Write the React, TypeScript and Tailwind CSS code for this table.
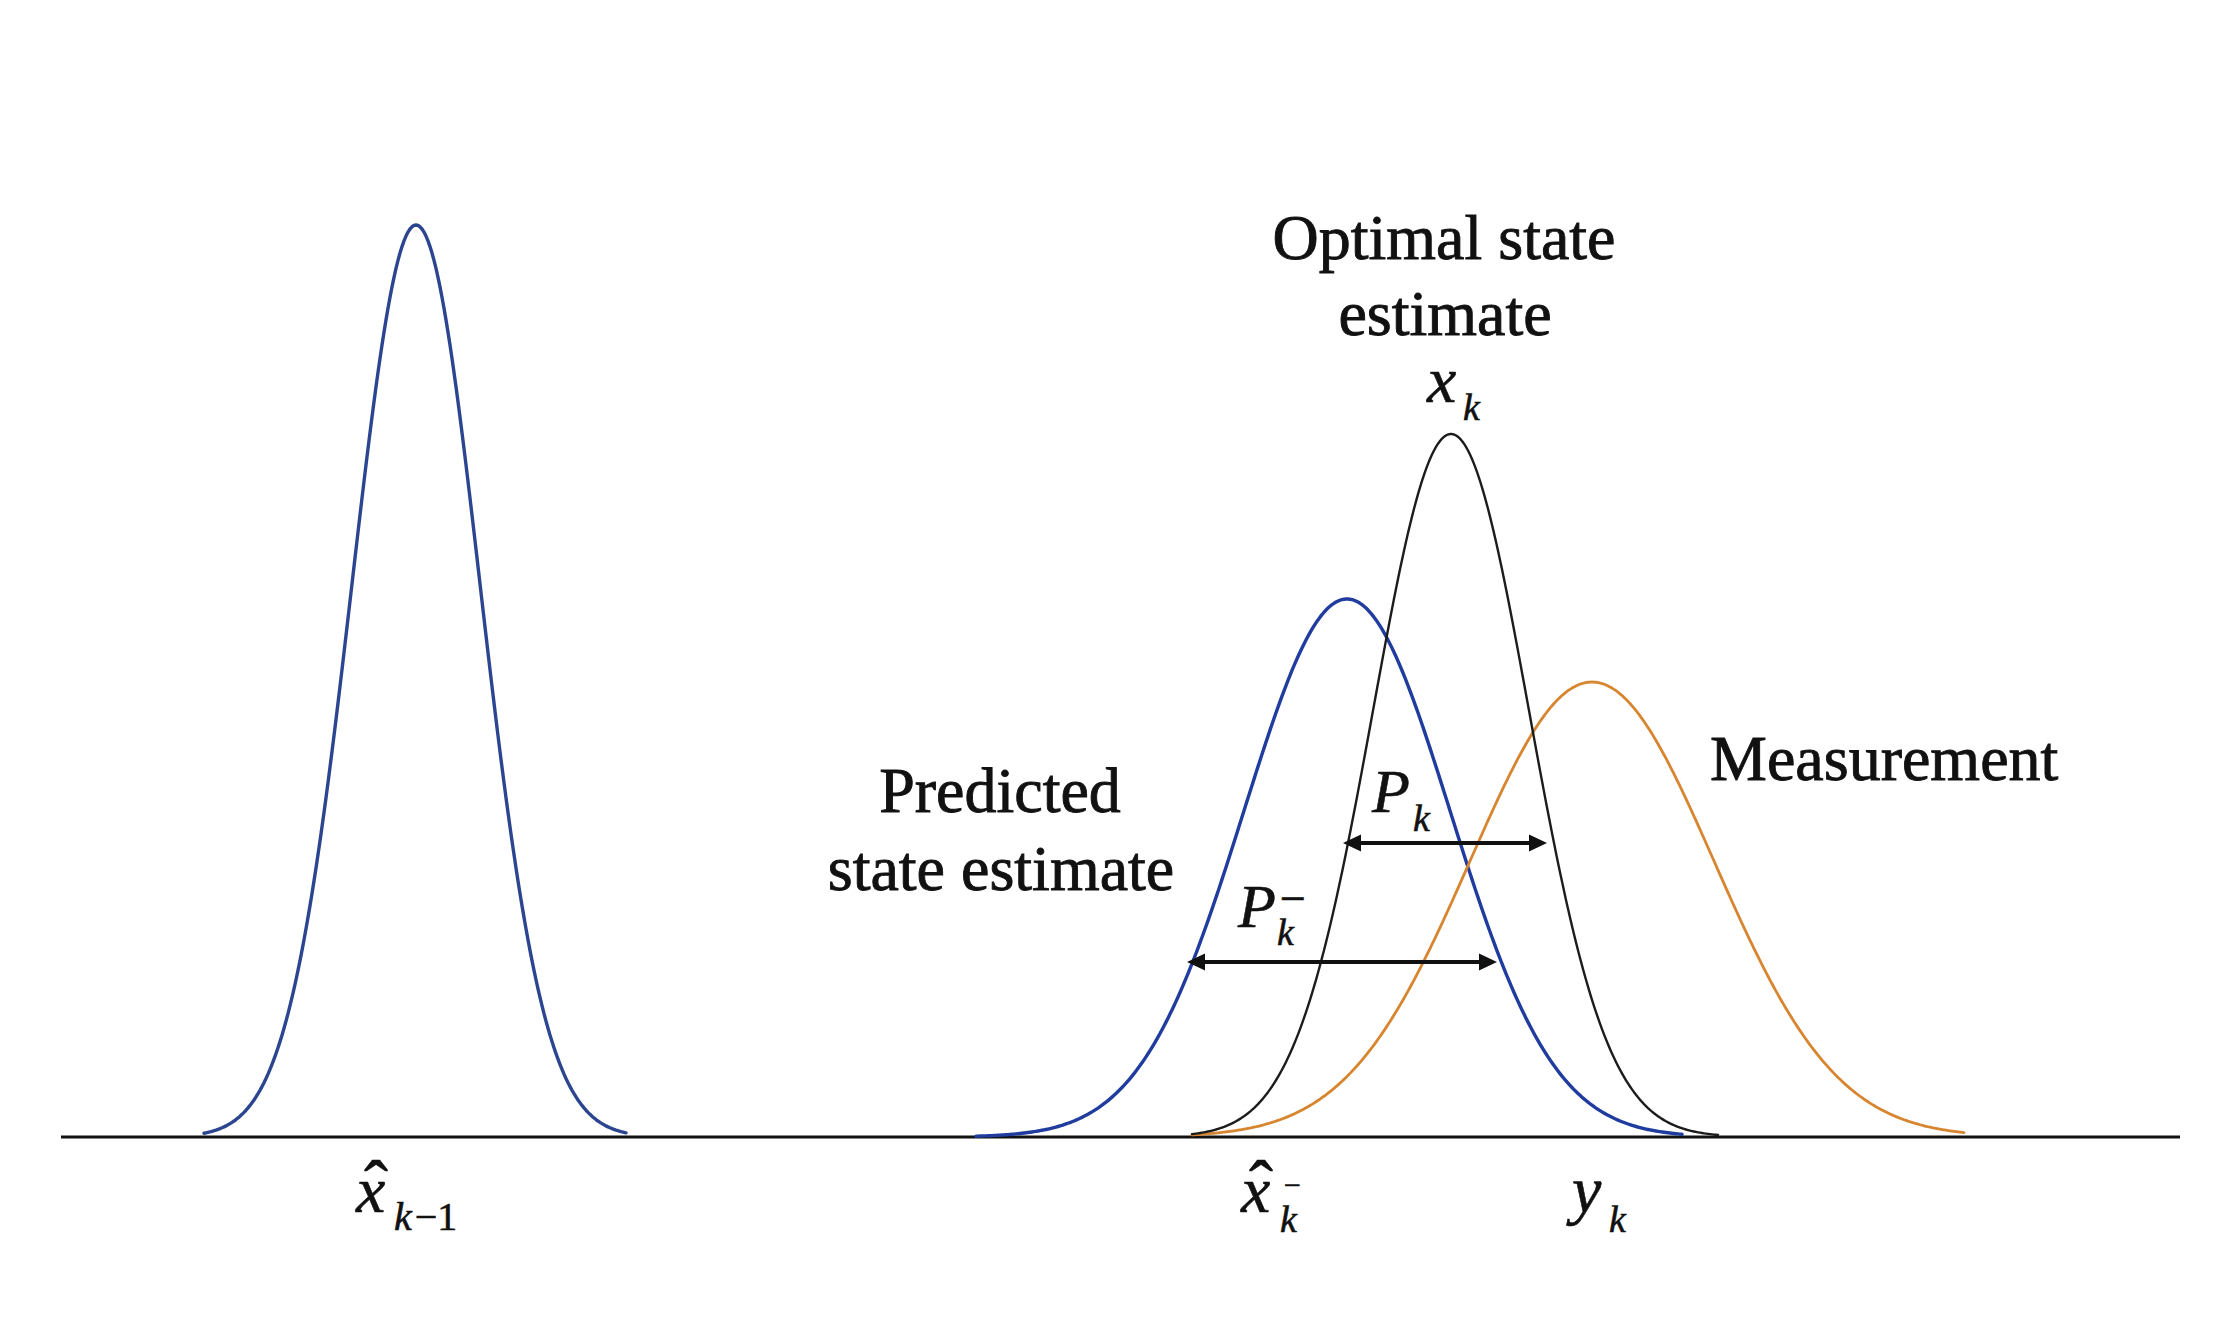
import React from 'react';

const BASE = 1137;

// gaussian curve as a polyline path, peakY is the screen y of the top
function gaussPath(mu: number, sigma: number, peakY: number, x0: number, x1: number) {
  const h = BASE - peakY;
  let d = '';
  for (let x = x0; x <= x1; x += 2) {
    const y = BASE - h * Math.exp(-((x - mu) * (x - mu)) / (2 * sigma * sigma));
    d += (d ? ' L' : 'M') + x + ' ' + y.toFixed(2);
  }
  return d;
}

const curves = [
  { id: 'prev', d: gaussPath(416, 64, 225, 204, 626), stroke: '#2b4590', width: 3.4 },
  { id: 'pred', d: gaussPath(1347, 103, 599, 976, 1682), stroke: '#1f3c9e', width: 3.4 },
  { id: 'meas', d: gaussPath(1592, 122, 682, 1192, 1964), stroke: '#d7852f', width: 2.8 },
  { id: 'opt', d: gaussPath(1451, 78, 434, 1192, 1718), stroke: '#1c1c1c', width: 2.4 },
];

const Arrow: React.FC<{ x1: number; x2: number; y: number }> = ({ x1, x2, y }) => (
  <g fill="#111" stroke="#111">
    <line x1={x1 + 12} y1={y} x2={x2 - 12} y2={y} strokeWidth={3.8} />
    <polygon points={`${x1},${y} ${x1 + 18},${y - 8.5} ${x1 + 18},${y + 8.5}`} stroke="none" />
    <polygon points={`${x2},${y} ${x2 - 18},${y - 8.5} ${x2 - 18},${y + 8.5}`} stroke="none" />
  </g>
);

const App: React.FC = () => {
  return (
    <div className="w-[2213px] h-[1326px] bg-white overflow-hidden font-['Liberation_Serif',serif] text-[#111]">
      <svg width="2213" height="1326" viewBox="0 0 2213 1326" className="block">
        {/* axis */}
        <line x1={61} y1={BASE} x2={2180} y2={BASE} stroke="#111" strokeWidth={3.2} />

        {curves.map((c) => (
          <path key={c.id} d={c.d} fill="none" stroke={c.stroke} strokeWidth={c.width} strokeLinejoin="round" strokeLinecap="round" />
        ))}

        <Arrow x1={1343} x2={1547} y={843} />
        <Arrow x1={1187} x2={1497} y={962} />

        <g fill="#111" stroke="#111" strokeWidth={0.9} fontSize={64}>
          <text x={1444} y={259} textAnchor="middle">Optimal state</text>
          <text x={1445} y={335} textAnchor="middle">estimate</text>
          <text x={1000} y={812} textAnchor="middle">Predicted</text>
          <text x={1001} y={890} textAnchor="middle">state estimate</text>
          <text x={1710} y={780}>Measurement</text>
        </g>

        {/* math labels */}
        <g fill="#111" stroke="#111" strokeWidth={0.6} fontStyle="italic">
          {/* x_k */}
          <text x={1427} y={402} fontSize={66}>
            x<tspan x={1463} y={420} fontSize={38}>k</tspan>
          </text>

          {/* P_k */}
          <text x={1372} y={812} fontSize={62}>
            P<tspan x={1413} y={831} fontSize={38}>k</tspan>
          </text>

          {/* P_k^- */}
          <text x={1238} y={927} fontSize={62}>
            P<tspan x={1280} y={914} fontSize={46} fontStyle="normal">−</tspan>
            <tspan x={1277} y={945} fontSize={38}>k</tspan>
          </text>

          {/* x̂_{k-1} */}
          <text x={356} y={1212} fontSize={66}>
            x<tspan x={376} y={1210} fontSize={72} fontStyle="normal" textAnchor="middle">ˆ</tspan>
            <tspan x={394} y={1230} fontSize={40}>k</tspan>
            <tspan dx={3} fontSize={40} fontStyle="normal">−1</tspan>
          </text>

          {/* x̂_k^- */}
          <text x={1241} y={1212} fontSize={66}>
            x<tspan x={1261} y={1210} fontSize={72} fontStyle="normal" textAnchor="middle">ˆ</tspan>
            <tspan x={1284} y={1195} fontSize={30} fontStyle="normal">−</tspan>
            <tspan x={1280} y={1232} fontSize={38}>k</tspan>
          </text>

          {/* y_k */}
          <text x={1572} y={1212} fontSize={66}>
            y<tspan x={1609} y={1232} fontSize={38}>k</tspan>
          </text>
        </g>
      </svg>
    </div>
  );
};

export default App;
